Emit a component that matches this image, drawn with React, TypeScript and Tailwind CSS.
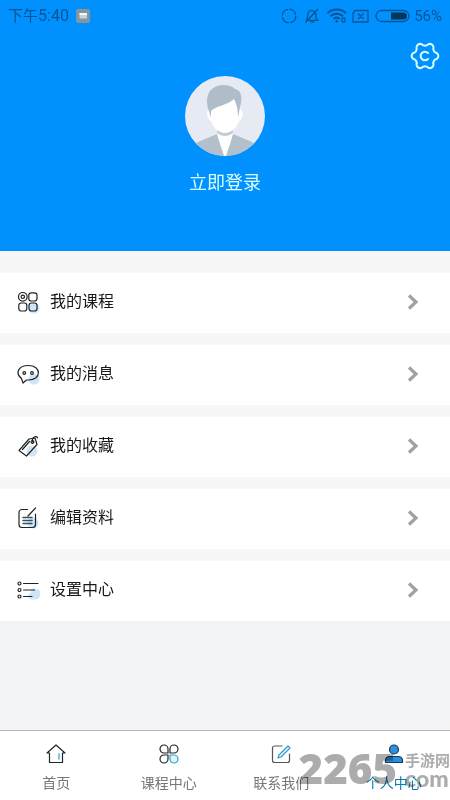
import type { ReactNode } from "react";

function StatusBar() {
  return (
    <div className="flex h-8 items-center justify-between px-2 text-[#075594]">
      <div className="flex items-center gap-[7px] font-[Roboto,'Noto_Sans_CJK_SC',sans-serif] text-[15px] leading-5">
        <span>
          下午<span className="text-base">5:40</span>
        </span>
        <svg className="size-[14px]" viewBox="0 0 14 14" aria-hidden="true">
          <rect width="14" height="14" rx="2" fill="#8295a3" />
          <rect x="3.5" y="4" width="7.5" height="5.5" fill="#c3d6de" />
          <path d="M3.5 5h7.5" stroke="#f5fbf9" strokeWidth="2" />
        </svg>
      </div>
      <div className="flex items-center">
        <svg className="h-4 w-[130px]" viewBox="0 0 130 16" fill="none" stroke="currentColor" strokeWidth="1.3" aria-hidden="true">
          <circle cx="7" cy="8" r="6.8" strokeDasharray="9.4 1.3" />
          <path d="M24.5 12.3h11.2l-1.8-2.6V6a4.3 4.3 0 0 0-8-1.3L25.5 9.5Zm3.5 0a2.2 2.2 0 0 0 4.3 0M23.500 14.500 36 1" />
          <path d="M45.500 5.200c5-4.800 13.500-4.800 18.500 0" strokeWidth="2" />
          <path d="M48.500 8.300c3.500-3.300 9-3.300 12.500 0" strokeWidth="2" />
          <path d="M51.500 11c1.800-1.600 4.500-1.600 6.300 0" strokeWidth="2" />
          <circle cx="54.700" cy="13.300" r="1.200" fill="currentColor" stroke="none" />
          <rect x="60" y="10" width="3" height="4" rx="1" />
          <path d="M73 2.500h13v11.500h-15v-9Zm3 3 5.500 5.500m0-5.500-5.500 5.500" />
          <rect x="94" y="2.500" width="33" height="11" rx="5.500" />
          <path d="M109 4.500h12.500a3.500 3.500 0 0 1 0 7H109Z" fill="#07365d" stroke="none" />
        </svg>
        <span className="ml-[2px] font-[Roboto,sans-serif] text-[15px]">56%</span>
      </div>
    </div>
  );
}

function Avatar() {
  return (
    <svg className="size-20" viewBox="0 0 80 80" aria-hidden="true">
      <defs>
        <clipPath id="portrait">
          <circle cx="40" cy="40" r="40" />
        </clipPath>
      </defs>
      <g clipPath="url(#portrait)">
        <rect width="80" height="80" fill="#e6ebf3" />
        <path d="M32 58 13 66C8 68 6 75 5 80h70c-1-7-3-12-8-14l-19-8Z" fill="#b3bfca" />
        <path d="M32 50v8c2 8 5 15 7 22h2c2-7 5-14 7-22v-8Z" fill="white" />
        <path d="M32 52c5 5 11 5 16 0v5c-5 4-11 4-16 0Z" fill="#c3ccd4" />
        <path d="M24 34c-3 0-2 10 2 11 2 7 8 12 14 12s12-5 14-12c4-1 5-11 2-11L50 20Z" fill="white" />
        <path d="M26 42C25 37 22 32 22 25 22 14 30 9 38 9c5 0 9 1 12 4 6 1 8 8 5 18l-2 11c0-7-1-14-4-19-6 6-18 7-23 12Z" fill="#b0bcc8" />
      </g>
    </svg>
  );
}

function GearIcon() {
  return (
    <svg className="size-7 overflow-visible" viewBox="0 0 28 28" fill="none" stroke="#d9ffff" strokeWidth="2" strokeLinejoin="round" strokeLinecap="round" aria-hidden="true">
      <path d="M25.600 10.900a3.600 3.600 0 0 1 0 6.200A4.200 4.200 0 0 0 22.500 22.500a3.600 3.600 0 0 1-5.400 3.100A4.200 4.200 0 0 0 10.900 25.600a3.600 3.600 0 0 1-5.400-3.100A4.200 4.200 0 0 0 2.400 17.100a3.600 3.600 0 0 1 0-6.200A4.200 4.200 0 0 0 5.500 5.500a3.600 3.600 0 0 1 5.400-3.100A4.200 4.200 0 0 0 17.100 2.400a3.600 3.600 0 0 1 5.400 3.100A4.200 4.200 0 0 0 25.600 10.900Z" />
      <path d="M17 11a4.300 4.300 0 1 0 0 6" />
    </svg>
  );
}

const lineProps = {
  className: "size-6 shrink-0",
  viewBox: "0 0 24 24",
  fill: "none",
  stroke: "#202426",
  strokeWidth: 1.2,
  strokeLinecap: "round" as const,
  strokeLinejoin: "round" as const,
  "aria-hidden": true,
};

const menu: { label: string; icon: ReactNode }[] = [
  {
    label: "我的课程",
    icon: (
      <svg {...lineProps}>
        <circle cx="18" cy="18" r="5.500" fill="#cfe5f8" stroke="none" />
        <circle cx="6.800" cy="6.800" r="4.300" />
        <circle cx="6.800" cy="6.800" r="1.700" />
        <rect x="12.800" y="2.800" width="8.200" height="8.200" rx="2.500" />
        <rect x="2.800" y="13" width="8" height="8" rx="2.500" />
        <rect x="13" y="13" width="8" height="8" rx="2.500" />
      </svg>
    ),
  },
  {
    label: "我的消息",
    icon: (
      <svg {...lineProps}>
        <circle cx="18" cy="17" r="5.500" fill="#cfe5f8" stroke="none" />
        <path d="M5.500 16.500C-1 11.500 2 3.500 12.500 3.500c13 0 13.500 14.500 0 14.500h-2l-3.500 3Z" />
        <circle cx="8.300" cy="11" r="1.300" />
        <circle cx="16" cy="11" r="1.300" />
      </svg>
    ),
  },
  {
    label: "我的收藏",
    icon: (
      <svg {...lineProps}>
        <circle cx="16" cy="17" r="5.500" fill="#cfe5f8" stroke="none" />
        <path d="M3 16.500 13 5l6-1 2 6.500L10.500 22ZM6.500 15.500l7-8" />
        <circle cx="16.500" cy="8" r="1.400" />
        <path d="M16.500 8c-1-5 4-7 5-4" />
      </svg>
    ),
  },
  {
    label: "编辑资料",
    icon: (
      <svg {...lineProps}>
        <circle cx="17" cy="17" r="5.500" fill="#cfe5f8" stroke="none" />
        <path d="M11.500 3.500H6a3 3 0 0 0-3 3v12a3 3 0 0 0 3 3h10.500a3 3 0 0 0 3-3V8M12 10l7.500-8" />
        <path d="M7 11.500h9M7 14.500h9M7 17.500h9" stroke="#31545e" strokeWidth="1.500" />
      </svg>
    ),
  },
  {
    label: "设置中心",
    icon: (
      <svg {...lineProps}>
        <path d="M17 10.500h2a5.500 5.500 0 0 1 0 11h-3c-4 0-5-5-2-6 1-.3 1-5 3-5Z" fill="#cfe5f8" stroke="none" />
        <circle cx="3.500" cy="5.500" r="1.500" />
        <circle cx="3.500" cy="12" r="1.500" />
        <circle cx="3.500" cy="18.500" r="1.500" />
        <path d="M7.500 5.500H22M7.500 12h11M7.500 18.500H16" />
      </svg>
    ),
  },
];

const tabs: { label: string; active?: boolean; icon: ReactNode }[] = [
  {
    label: "首页",
    icon: (
      <svg {...lineProps}>
        <path d="M5.500 11H3l9-8 9 8h-2.500v9.500h-13V11" />
        <path d="M15 12v5" stroke="#58b8dd" strokeWidth="1.600" />
      </svg>
    ),
  },
  {
    label: "课程中心",
    icon: (
      <svg {...lineProps}>
        <path d="M11 11H7a4 4 0 1 1 4-4ZM13 11h4a4 4 0 1 0-4-4ZM11 13H7a4 4 0 1 0 4 4Z" />
        <path d="M13 13h4a4 4 0 1 1-4 4Z" stroke="#3b9dbb" fill="#d9f6ff" />
      </svg>
    ),
  },
  {
    label: "联系我们",
    icon: (
      <svg {...lineProps}>
        <path d="M13 4H5.500A2 2 0 0 0 3.500 6v12.500a2 2 0 0 0 2 2h13a2 2 0 0 0 2-2V12" stroke="#555" />
        <path d="m9 16 1-3 9-9 2 2-9 9Z" stroke="#319ac6" fill="#eaffff" />
      </svg>
    ),
  },
  {
    label: "个人中心",
    active: true,
    icon: (
      <svg {...lineProps} stroke="#133b5c" fill="#2b8fe0">
        <circle cx="12" cy="7.500" r="4.500" />
        <path d="M3.500 20.500v-2a4 4 0 0 1 4-4h9a4 4 0 0 1 4 4v2Z" />
      </svg>
    ),
  },
];

export default function App() {
  return (
    <div className="relative flex min-h-screen flex-col overflow-hidden bg-[#f3f4f6] font-['Noto_Sans_CJK_SC',sans-serif]">
      <header className="bg-[#0091ff] pb-[57px]">
        <StatusBar />
        <div className="grid grid-cols-[1fr_auto_1fr] items-start px-[11px] pt-[10px]">
          <button type="button" aria-label="设置" className="col-start-3 justify-self-end">
            <GearIcon />
          </button>
          <button type="button" className="col-start-2 row-start-1 mt-[34px] flex flex-col items-center gap-3 text-lg leading-[26px] text-[#d9ffff]">
            <Avatar />
            立即登录
          </button>
        </div>
      </header>

      <main className="flex-1">
        <ul className="flex flex-col gap-3 bg-[#f7f7f7] pt-[22px]">
          {menu.map((item) => (
            <li key={item.label}>
              <button type="button" className="flex h-15 w-full items-center gap-[10px] bg-white pr-[31px] pb-[2px] pl-4 text-left text-base text-[#181818]">
                {item.icon}
                <span className="flex-1 pb-1">{item.label}</span>
                <svg className="h-4 w-3" viewBox="0 0 12 16" fill="none" stroke="#a1a1a1" strokeWidth="3.200" aria-hidden="true">
                  <path d="m2 1.500 7 6.500-7 6.500" />
                </svg>
              </button>
            </li>
          ))}
        </ul>
      </main>

      <nav className="grid h-[70px] grid-cols-4 border-t border-[#b8b8ba] bg-white">
        {tabs.map((tab) => (
          <a
            key={tab.label}
            href="#"
            aria-current={tab.active ? "page" : undefined}
            className={`flex flex-col items-center gap-1 pt-[11px] text-sm leading-6 ${tab.active ? "text-[#087bb4]" : "text-[#777777]"}`}
          >
            {tab.icon}
            {tab.label}
          </a>
        ))}
      </nav>

      <div className="pointer-events-none absolute right-0 bottom-3 flex items-center gap-2 text-[#acacac] mix-blend-multiply">
        <span className="font-['Open_Sans','Liberation_Sans',sans-serif] text-[42px] leading-10 font-extrabold">2265</span>
        <span className="flex flex-col">
          <span className="text-[15px] leading-5 font-bold">手游网</span>
          <span className="font-['Lato','Liberation_Sans',sans-serif] text-[23px] leading-4 font-black">com</span>
        </span>
      </div>
    </div>
  );
}
